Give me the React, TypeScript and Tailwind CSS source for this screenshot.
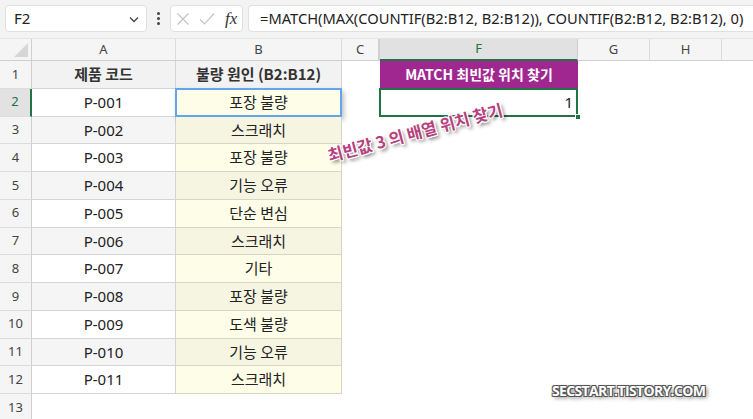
import React from "react";

const FONT = '"Noto Sans", "Noto Sans CJK KR", sans-serif';
const KFONT = '"Noto Sans CJK KR", "Noto Sans", sans-serif';

const data: [string, string][] = [
  ["P-001", "포장 불량"],
  ["P-002", "스크래치"],
  ["P-003", "포장 불량"],
  ["P-004", "기능 오류"],
  ["P-005", "단순 변심"],
  ["P-006", "스크래치"],
  ["P-007", "기타"],
  ["P-008", "포장 불량"],
  ["P-009", "도색 불량"],
  ["P-010", "기능 오류"],
  ["P-011", "스크래치"],
];

function RowHead({ n, active }: { n: number; active?: boolean }) {
  return (
    <div
      className={`w-[32px] shrink-0 flex items-center justify-center text-[13px] border-b border-b-[#dcdcdc] ${
        active
          ? "bg-[#e2e2e2] text-[#217346] border-r-2 border-r-[#217346]"
          : "bg-[#f5f5f5] text-[#444] border-r border-r-[#cfcfcf]"
      }`}
    >
      {n}
    </div>
  );
}

export default function App() {
  return (
    <div
      className="w-[753px] h-[419px] overflow-hidden bg-white relative"
      style={{ fontFamily: FONT }}
    >
      {/* Formula bar */}
      <div className="h-[38px] bg-[#f3f3f3] flex items-start pt-[5px] pl-[5px] gap-0">
        <div className="w-[142px] h-[27px] bg-white border border-[#e0e0e0] rounded-[4px] flex items-center justify-between pl-[8px] pr-[6px] text-[15px] text-[#222]">
          <span>F2</span>
          <svg width="12" height="12" viewBox="0 0 12 12">
            <path d="M2 4.5 L6 8.5 L10 4.5" fill="none" stroke="#444" strokeWidth="1.3" />
          </svg>
        </div>
        <div className="w-[23px] h-[27px] flex flex-col items-center justify-center gap-[2.5px]">
          <span className="w-[2.5px] h-[2.5px] bg-[#444] rounded-full" />
          <span className="w-[2.5px] h-[2.5px] bg-[#444] rounded-full" />
          <span className="w-[2.5px] h-[2.5px] bg-[#444] rounded-full" />
        </div>
        <div className="w-[73px] h-[27px] bg-white border border-[#e0e0e0] rounded-[4px] flex items-center pl-[5px]">
          <svg width="14" height="14" viewBox="0 0 14 14">
            <path d="M1.5 1.5 L12.5 12.5 M12.5 1.5 L1.5 12.5" stroke="#c4c4c4" strokeWidth="1.2" />
          </svg>
          <svg className="ml-[9px]" width="16" height="14" viewBox="0 0 16 14">
            <path d="M1 7.5 L5.5 12 L15 1.5" fill="none" stroke="#c4c4c4" strokeWidth="1.2" />
          </svg>
          <span
            className="ml-[10px] text-[17px] italic text-[#333] leading-none"
            style={{ fontFamily: '"Liberation Serif", serif' }}
          >
            fx
          </span>
        </div>
        <div className="ml-[5px] flex-1 h-[27px] bg-white border border-[#e0e0e0] border-r-0 rounded-l-[4px] flex items-center pl-[11px] text-[14.7px] text-[#222] whitespace-nowrap overflow-hidden">
          =MATCH(MAX(COUNTIF(B2:B12, B2:B12)), COUNTIF(B2:B12, B2:B12), 0)
        </div>
      </div>

      {/* Column headers */}
      <div className="h-[23px] flex bg-[#f5f5f5] border-t border-t-[#e4e4e4] border-b border-b-[#cfcfcf] text-[13px] text-[#444]">
        <div className="w-[32px] shrink-0 border-r border-r-[#cfcfcf] relative">
          <div className="absolute right-[3px] bottom-[3px] w-0 h-0 border-l-[14px] border-l-transparent border-b-[14px] border-b-[#d6d6d6]" />
        </div>
        <div className="w-[144px] shrink-0 border-r border-r-[#dcdcdc] flex items-center justify-center">A</div>
        <div className="w-[166px] shrink-0 border-r border-r-[#dcdcdc] flex items-center justify-center">B</div>
        <div className="w-[38px] shrink-0 border-r-[2px] border-r-[#d0d0d0] flex items-center justify-center">C</div>
        <div className="w-[198px] shrink-0 bg-[#e1e1e1] text-[#217346] border-r border-r-[#cfcfcf] border-b-2 border-b-[#217346] -mb-px flex items-center justify-center">F</div>
        <div className="w-[72px] shrink-0 border-r border-r-[#dcdcdc] flex items-center justify-center">G</div>
        <div className="w-[72px] shrink-0 border-r border-r-[#dcdcdc] flex items-center justify-center">H</div>
        <div className="flex-1" />
      </div>

      {/* Row 1 */}
      <div className="h-[27.75px] flex">
        <RowHead n={1} />
        <div
          className="w-[144px] shrink-0 bg-[#f2f2f2] border-r border-b border-[#d4d4d4] flex items-center justify-center text-[15px] font-bold text-[#333]"
          style={{ fontFamily: KFONT }}
        >
          제품 코드
        </div>
        <div
          className="w-[166px] shrink-0 bg-[#f2f2f2] border-r border-b border-[#d4d4d4] flex items-center justify-center text-[15px] font-bold text-[#333]"
          style={{ fontFamily: KFONT }}
        >
          불량 원인 (B2:B12)
        </div>
        <div className="w-[38px] shrink-0" />
        <div
          className="w-[198px] shrink-0 bg-[#a0278f] flex items-center justify-center text-[14px] font-bold text-white"
          style={{ fontFamily: KFONT }}
        >
          MATCH 최빈값 위치 찾기
        </div>
        <div className="flex-1" />
      </div>

      {/* Data rows */}
      {data.map(([code, reason], i) => {
        const r = i + 2;
        const odd = r % 2 === 1;
        return (
          <div key={r} className="h-[27.75px] flex">
            <RowHead n={r} active={r === 2} />
            <div
              className={`w-[144px] shrink-0 border-r border-b border-[#d4d4d4] flex items-center justify-center text-[15px] text-[#222] ${
                odd ? "bg-[#f5f5f5]" : "bg-white"
              }`}
            >
              {code}
            </div>
            <div
              className={`w-[166px] shrink-0 border-r border-b border-[#d6d6c8] flex items-center justify-center text-[15px] text-[#222] relative ${
                odd ? "bg-[#f5f5e2]" : "bg-[#fdfde8]"
              }`}
              style={{ fontFamily: KFONT }}
            >
              {reason}
              {r === 2 && (
                <div className="absolute -left-px -top-px -right-px -bottom-px border-2 border-[#63a6ec] shadow-[2px_3px_5px_rgba(0,0,0,0.25)]" />
              )}
            </div>
            <div className="w-[38px] shrink-0" />
            <div className="w-[198px] shrink-0 relative flex items-center justify-end pr-[5px] text-[15px] text-[#222]">
              {r === 2 && (
                <>
                  <span>1</span>
                  <div className="absolute -left-px -top-px right-0 bottom-0 border-2 border-[#217346]" />
                  <div className="absolute -right-[3px] -bottom-[3px] w-[6px] h-[6px] bg-[#217346] border border-white" />
                </>
              )}
            </div>
            <div className="flex-1" />
          </div>
        );
      })}

      {/* Row 13 */}
      <div className="h-[27.75px] flex">
        <RowHead n={13} />
        <div className="flex-1" />
      </div>

      {/* Rotated annotation */}
      <div
        className="absolute left-[325px] top-[120px] text-[16.5px] font-bold text-[#b5427f] whitespace-nowrap origin-center -rotate-[15deg]"
        style={{
          fontFamily: KFONT,
          textShadow:
            "1px 1px 0 #fff, -1px -1px 0 #fff, 1px -1px 0 #fff, -1px 1px 0 #fff, 0 1px 0 #fff, 1px 0 0 #fff, 0 -1px 0 #fff, -1px 0 0 #fff, 2px 3px 4px rgba(0,0,0,0.6)",
        }}
      >
        최빈값 3 의 배열 위치 찾기
      </div>

      {/* Watermark */}
      <div
        className="absolute left-[552px] top-[380px] text-[14px] font-bold text-white tracking-[-0.65px]"
        style={{
          fontFamily: '"Open Sans", sans-serif',
          textShadow:
            "1px 1px 0 #555, -1px -1px 0 #555, 1px -1px 0 #555, -1px 1px 0 #555, 2px 2px 4px rgba(0,0,0,0.6)",
        }}
      >
        SECSTART.TISTORY.COM
      </div>
    </div>
  );
}
